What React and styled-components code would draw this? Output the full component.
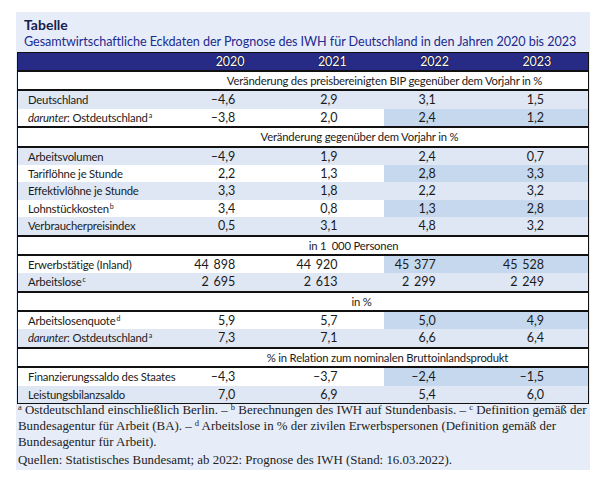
import React from 'react'
import styled, { createGlobalStyle } from 'styled-components'

const GlobalStyle = createGlobalStyle`
  body {
    margin: 0;
    background: #fff;
    font-family: Lato, 'Liberation Sans', Arial, sans-serif;
  }
`

const Panel = styled.div`
  width: 574px;
  margin: 12px 0 0 16px;
  background: #e6edf8;
  padding-bottom: 2px;
`

const Heading = styled.div`
  padding: 4px 8px 0;
`

const Kicker = styled.div`
  font-size: 14px;
  font-weight: bold;
  color: #17204f;
  line-height: 17px;
`

const Subtitle = styled.div`
  font-size: 12.6px;
  letter-spacing: -0.05px;
  color: #1d2a8f;
  line-height: 18px;
  white-space: nowrap;
`

const Table = styled.div`
  margin: 1px 1px 0 1px;
  border: 1px solid #111;
  font-size: 11.3px;
  letter-spacing: -0.2px;
  color: #1b1b1b;
`

const Row = styled.div`
  display: grid;
  grid-template-columns: 161px repeat(4, 1fr);
  height: 17.4px;
  align-items: stretch;
  border-bottom: ${p => (p.rule ? '2px solid #111' : 'none')};
`

const HeadRow = styled(Row)`
  background: #272b85;
  height: 17px;
  border-bottom: 2px solid #111;
`

const Year = styled.div`
  color: #fff;
  text-align: center;
  line-height: 17px;
  font-size: 12.5px;
  letter-spacing: 0;
  text-shadow: 0 0 1px #000, 0 0 1px #000;
`

const SectionRow = styled.div`
  display: grid;
  grid-template-columns: 161px 1fr;
  height: 17.4px;
  background: #fff;
  border-bottom: 2px solid #111;
`

const SectionText = styled.div`
  grid-column: 2;
  text-align: center;
  line-height: 17.4px;
  white-space: pre;
  transform: translateX(${p => p.shift || 0}px);
`

const Label = styled.div`
  padding-left: 10px;
  line-height: 17.4px;
  white-space: nowrap;
  background: ${p => (p.light ? '#dfe7f5' : '#fff')};

  em {
    font-style: italic;
  }

  sup {
    font-size: 7px;
    vertical-align: 4px;
    line-height: 0;
    margin-left: 1px;
  }
`

const Value = styled.div`
  text-align: right;
  padding-right: ${p => p.pad}px;
  line-height: 17.4px;
  font-size: 12.5px;
  letter-spacing: 0;
  white-space: pre;
  background: ${p => (p.light ? '#dfe7f5' : p.forecast ? '#c5d8ee' : '#fff')};
`

const Notes = styled.div`
  font-family: 'Liberation Serif', 'Times New Roman', serif;
  font-size: 12.9px;
  line-height: 16px;
  color: #222;
  margin-top: -2px;
  padding: 0 2px;
  white-space: nowrap;

  sup {
    font-size: 8.5px;
    vertical-align: 4px;
    line-height: 0;
  }
`

const Sources = styled.p`
  margin: 2px 0 0;
`

const FootText = styled.p`
  margin: 0;
`

const pads = [46, 46, 50, 44]

const sections = [
  {
    title: 'Veränderung des preisbereinigten BIP gegenüber dem Vorjahr in %',
    shift: 1,
    rows: [
      { label: 'Deutschland', values: ['–4,6', '2,9', '3,1', '1,5'], light: true },
      { label: <><em>darunter</em>: Ostdeutschland<sup>a</sup></>, values: ['–3,8', '2,0', '2,4', '1,2'] },
    ],
  },
  {
    title: 'Veränderung gegenüber dem Vorjahr in %',
    shift: -24,
    rows: [
      { label: 'Arbeitsvolumen', values: ['–4,9', '1,9', '2,4', '0,7'], light: true },
      { label: 'Tariflöhne je Stunde', values: ['2,2', '1,3', '2,8', '3,3'] },
      { label: 'Effektivlöhne je Stunde', values: ['3,3', '1,8', '2,2', '3,2'], light: true },
      { label: <>Lohnstückkosten<sup>b</sup></>, values: ['3,4', '0,8', '1,3', '2,8'] },
      { label: 'Verbraucherpreisindex', values: ['0,5', '3,1', '4,8', '3,2'], light: true },
    ],
  },
  {
    title: 'in 1  000 Personen',
    shift: -30,
    rows: [
      { label: 'Erwerbstätige (Inland)', values: ['44 \u2009898', '44 \u2009920', '45 \u2009377', '45 \u2009528'] },
      { label: <>Arbeitslose<sup>c</sup></>, values: ['2 \u2009695', '2 \u2009613', '2 \u2009299', '2 \u2009249'], light: true },
    ],
  },
  {
    title: 'in %',
    shift: -22,
    rows: [
      { label: <>Arbeitslosenquote<sup>d</sup></>, values: ['5,9', '5,7', '5,0', '4,9'] },
      { label: <><em>darunter</em>: Ostdeutschland<sup>a</sup></>, values: ['7,3', '7,1', '6,6', '6,4'], light: true },
    ],
  },
  {
    title: '% in Relation zum nominalen Bruttoinlandsprodukt',
    shift: 4,
    rows: [
      { label: 'Finanzierungssaldo des Staates', values: ['–4,3', '–3,7', '–2,4', '–1,5'] },
      { label: 'Leistungsbilanzsaldo', values: ['7,0', '6,9', '5,4', '6,0'], light: true },
    ],
  },
]

export default function App() {
  return (
    <>
      <GlobalStyle />
      <Panel>
        <Heading>
          <Kicker>Tabelle</Kicker>
          <Subtitle>
            Gesamtwirtschaftliche Eckdaten der Prognose des IWH für Deutschland in den Jahren 2020 bis 2023
          </Subtitle>
        </Heading>
        <Table>
          <HeadRow>
            <div />
            {['2020', '2021', '2022', '2023'].map(y => (
              <Year key={y}>{y}</Year>
            ))}
          </HeadRow>
          {sections.map((s, si) => (
            <React.Fragment key={si}>
              <SectionRow>
                <SectionText shift={s.shift}>{s.title}</SectionText>
              </SectionRow>
              {s.rows.map((r, ri) => (
                <Row key={ri} rule={ri === s.rows.length - 1 && si < sections.length - 1}>
                  <Label light={r.light}>{r.label}</Label>
                  {r.values.map((v, vi) => (
                    <Value key={vi} pad={pads[vi]} light={r.light} forecast={vi > 1}>
                      {v}
                    </Value>
                  ))}
                </Row>
              ))}
            </React.Fragment>
          ))}
        </Table>
        <Notes>
          <FootText>
            <sup>a</sup> Ostdeutschland einschließlich Berlin. – <sup>b</sup> Berechnungen des IWH auf Stundenbasis. – <sup>c</sup> Definition gemäß der
            <br />
            Bundesagentur für Arbeit (BA). – <sup>d</sup> Arbeitslose in % der zivilen Erwerbspersonen (Definition gemäß der
            <br />
            Bundesagentur für Arbeit).
          </FootText>
          <Sources>Quellen: Statistisches Bundesamt; ab 2022: Prognose des IWH (Stand: 16.03.2022).</Sources>
        </Notes>
      </Panel>
    </>
  )
}
